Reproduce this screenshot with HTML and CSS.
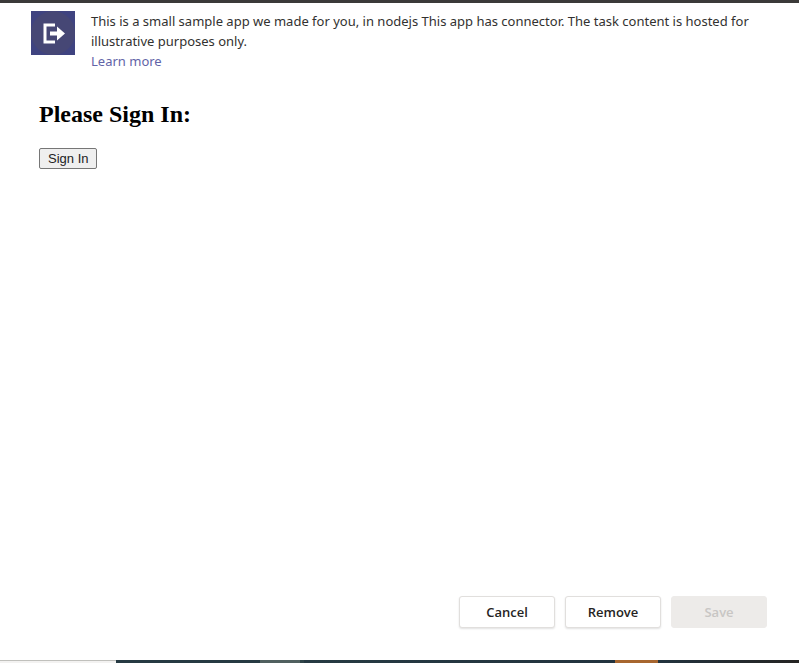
FILE: index.html
```html
<!DOCTYPE html>
<html lang="en">
<head>
<meta charset="utf-8">
<meta name="viewport" content="width=device-width, initial-scale=1">
<title>Connector sign in</title>
<link rel="stylesheet" href="styles.css">
</head>
<body>
<div class="dialog">
  <header class="app-info">
    <svg class="app-icon" viewBox="0 0 44 44" aria-hidden="true">
      <rect width="44" height="44" fill="#3f4380"/>
      <circle cx="22" cy="22" r="22" fill="#464775"/>
      <path d="M24 14H14V31H24" fill="none" stroke="#fff" stroke-width="3"/>
      <path d="M19 20.500H26V15.500L34 22.500L26 29.500V24.500H19Z" fill="#fff"/>
    </svg>
    <div class="app-text">
      <p class="description">This is a small sample app we made for you, in nodejs This app has connector. The task content is hosted for illustrative purposes only.</p>
      <a class="learn-more" href="#">Learn more</a>
    </div>
  </header>
  <main class="content">
    <h2 class="title">Please Sign In:</h2>
    <button class="sign-in" type="button">Sign In</button>
  </main>
  <footer class="actions">
    <button class="action" type="button">Cancel</button>
    <button class="action" type="button">Remove</button>
    <button class="action" type="button" disabled>Save</button>
  </footer>
</div>
<div class="backdrop-edge"></div>
</body>
</html>
```

FILE: styles.css
```css
* {
  box-sizing: border-box;
}

body {
  margin: 0;
  min-height: 100vh;
  display: flex;
  flex-direction: column;
  background: #fff;
  color: #323130;
  font-family: "Noto Sans", "Open Sans", sans-serif;
  font-size: 13px;
  line-height: 20px;
}

.dialog {
  flex: 1;
  display: flex;
  flex-direction: column;
  border-top: 3px solid #3b3a39;
  padding: 8px 32px 32px 31px;
}

.app-info {
  display: flex;
  gap: 16px;
}

.app-icon {
  flex: none;
  width: 44px;
  height: 44px;
}

.description {
  margin: 0;
}

.learn-more {
  color: #6264a7;
  text-decoration: none;
}

.content {
  flex: 1;
  padding: 30px 8px;
  color: #000;
}

.title {
  margin: 0 0 20px;
  font-family: "Liberation Serif", serif;
  font-size: 24px;
  line-height: 27px;
}

.sign-in {
  display: block;
  height: 21px;
  padding: 0 8px;
  border: 1px solid #767676;
  border-radius: 2px;
  background: #efefef;
  color: #222;
  font-family: "Liberation Sans", sans-serif;
  font-size: 13px;
}

.actions {
  display: flex;
  justify-content: flex-end;
  gap: 10px;
}

.action {
  width: 96px;
  height: 32px;
  padding: 0;
  border: 1px solid #e1dfdd;
  border-radius: 3px;
  background: #fff;
  box-shadow: 0 1px 2px rgba(0, 0, 0, 0.12);
  color: #252423;
  font-family: "Open Sans", sans-serif;
  font-size: 13px;
  font-weight: 600;
}

.action:disabled {
  border-color: #edebe9;
  background: #edebe9;
  box-shadow: none;
  color: #c8c6c4;
}

.backdrop-edge {
  height: 3px;
  background:
    linear-gradient(#c0c0bc 1px, #f3f2f1 1px) 0 0 / 116px 3px no-repeat,
    linear-gradient(90deg, #263a42 260px, #50605f 260px 300px, #2f4448 300px 304px, #263a42 304px, #22333e 615px, #a7662f 615px 658px, #22333e 658px, #252423);
}
```
